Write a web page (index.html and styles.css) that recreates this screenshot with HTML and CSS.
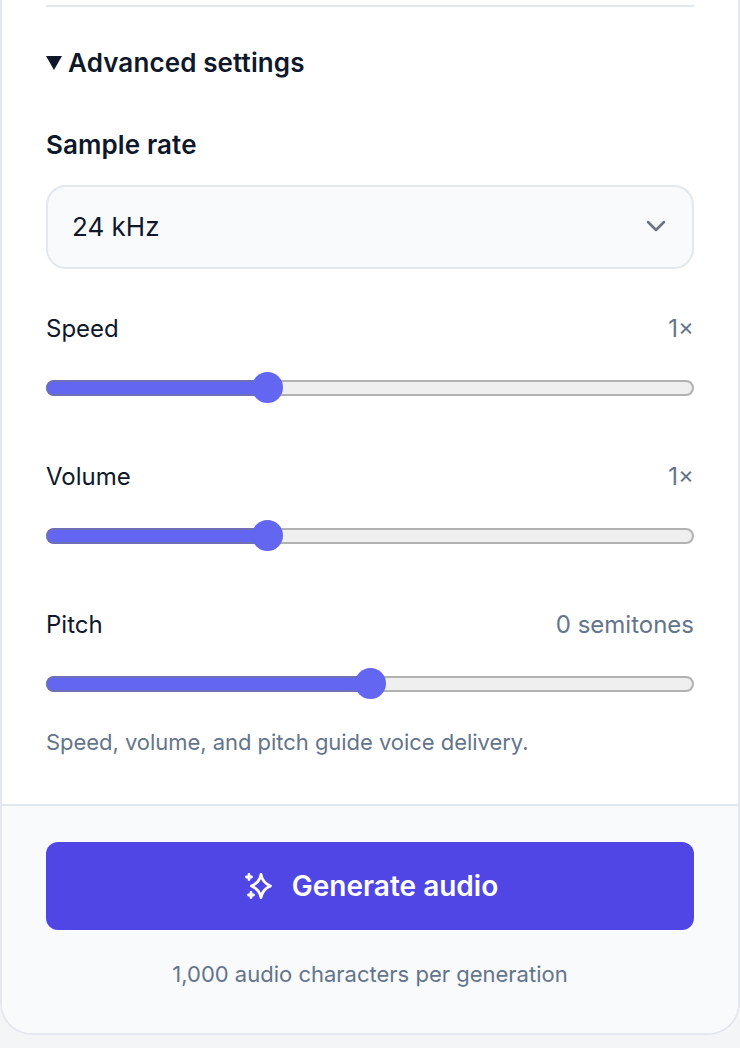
FILE: index.html
```html
<!DOCTYPE html>
<html lang="en">
<head>
    <meta charset="UTF-8">
    <meta name="viewport" content="width=device-width, initial-scale=1.0">
    <title>Generate audio</title>
    <link rel="stylesheet" href="styles.css">
</head>
<body>
    <div class="card">
        <div class="settings">
            <div class="divider"></div>

            <div class="advanced-title">
                <span class="caret"></span>
                <span>Advanced settings</span>
            </div>

            <div class="field-label">Sample rate</div>
            <div class="select">
                <span>24 kHz</span>
                <svg class="chevron" viewBox="0 0 20 20" fill="none" stroke="currentColor" stroke-width="2.5" stroke-linecap="round" stroke-linejoin="round">
                    <path d="M2 6l8 8 8-8"/>
                </svg>
            </div>

            <div class="slider-row">
                <div class="slider-head">
                    <span>Speed</span>
                    <span class="slider-value">1×</span>
                </div>
                <div class="track"><div class="fill" style="width: 34.4%"><span class="thumb"></span></div></div>
            </div>

            <div class="slider-row">
                <div class="slider-head">
                    <span>Volume</span>
                    <span class="slider-value">1×</span>
                </div>
                <div class="track"><div class="fill" style="width: 34.4%"><span class="thumb"></span></div></div>
            </div>

            <div class="slider-row">
                <div class="slider-head">
                    <span>Pitch</span>
                    <span class="slider-value">0 semitones</span>
                </div>
                <div class="track"><div class="fill" style="width: 50.5%"><span class="thumb"></span></div></div>
            </div>

            <p class="note">Speed, volume, and pitch guide voice delivery.</p>
        </div>

        <div class="footer">
            <button class="generate">
                <svg class="sparkle" viewBox="0 0 30 30" fill="none" stroke="currentColor" stroke-width="2.8" stroke-linecap="round" stroke-linejoin="round">
                    <path d="M17 3.500c1 5.500 3.500 9 9.500 11.500-6 2.500-8.500 6-9.500 11.500-1-5.500-3.500-9-9.500-11.500 6-2.500 8.500-6 9.500-11.500z"/>
                    <path d="M5 3.500v5M2.500 6h5"/>
                    <path d="M7 21.500v5M4.500 24h5"/>
                </svg>
                <span>Generate audio</span>
            </button>
            <p class="quota">1,000 audio characters per generation</p>
        </div>
    </div>
</body>
</html>
```

FILE: styles.css
```css
:root {
    --ink: #0f172a;
    --muted: #64748b;
    --line: #e2e8ec;
    --panel: #f8fafc;
    --indigo: #4f46e5;
    --accent: #6366f1;
}

* {
    box-sizing: border-box;
    margin: 0;
    padding: 0;
}

html, body {
    height: 100%;
    overflow: hidden;
}

body {
    font-family: Inter, "Liberation Sans", sans-serif;
    background: #f3f5f7;
    color: var(--ink);
}

.card {
    height: 1035px;
    background: #fff;
    border: 2px solid #e5e7f0;
    border-top: none;
    border-radius: 0 0 32px 32px;
    overflow: hidden;
}

.settings {
    height: 804px;
    padding: 5px 44px 0;
}

.divider {
    height: 2px;
    background: var(--line);
}

.advanced-title {
    display: flex;
    align-items: center;
    gap: 6px;
    margin-top: 40px;
    font-size: 26px;
    line-height: 32px;
    font-weight: 600;
    letter-spacing: 0.12px;
}

.caret {
    width: 0;
    height: 0;
    border-left: 8px solid transparent;
    border-right: 8px solid transparent;
    border-top: 14px solid var(--ink);
}

.field-label {
    margin-top: 50px;
    font-size: 26px;
    line-height: 32px;
    font-weight: 600;
    letter-spacing: 0.1px;
}

.select {
    display: flex;
    align-items: center;
    justify-content: space-between;
    height: 84px;
    margin-top: 24px;
    padding: 0 26px 2px 24px;
    background: var(--panel);
    border: 2px solid var(--line);
    border-radius: 20px;
    font-size: 26px;
}

.chevron {
    width: 20px;
    height: 20px;
    color: #6b7280;
}

.slider-row {
    margin-top: 44px;
}

.slider-row + .slider-row {
    margin-top: 65px;
}

.slider-head {
    display: flex;
    justify-content: space-between;
    font-size: 24px;
    line-height: 32px;
}

.slider-value {
    color: var(--muted);
}

.track {
    height: 16px;
    margin-top: 35px;
    background: #efefef;
    border: 2px solid #b2b2b2;
    border-radius: 8px;
}

.fill {
    position: relative;
    height: 16px;
    margin: -2px 0 0 -2px;
    background: var(--accent);
    border: 2px solid #6f6fb5;
    border-right: none;
    border-radius: 8px 0 0 8px;
}

.thumb {
    position: absolute;
    top: -10px;
    right: -15px;
    width: 31px;
    height: 31px;
    background: var(--accent);
    border-radius: 50%;
}

.note {
    margin-top: 34px;
    font-size: 22px;
    line-height: 32px;
    color: var(--muted);
    letter-spacing: -0.04px;
}

.footer {
    height: 229px;
    padding: 36px 44px 0;
    background: var(--panel);
    border-top: 2px solid var(--line);
    text-align: center;
}

.generate {
    display: flex;
    align-items: center;
    justify-content: center;
    gap: 18px;
    width: 100%;
    height: 88px;
    padding-left: 2px;
    background: var(--indigo);
    color: #fff;
    border: none;
    border-radius: 12px;
    font-family: inherit;
    font-size: 28px;
    font-weight: 600;
}

.sparkle {
    width: 30px;
    height: 30px;
}

.quota {
    margin-top: 28px;
    font-size: 22px;
    line-height: 32px;
    color: var(--muted);
}
```
